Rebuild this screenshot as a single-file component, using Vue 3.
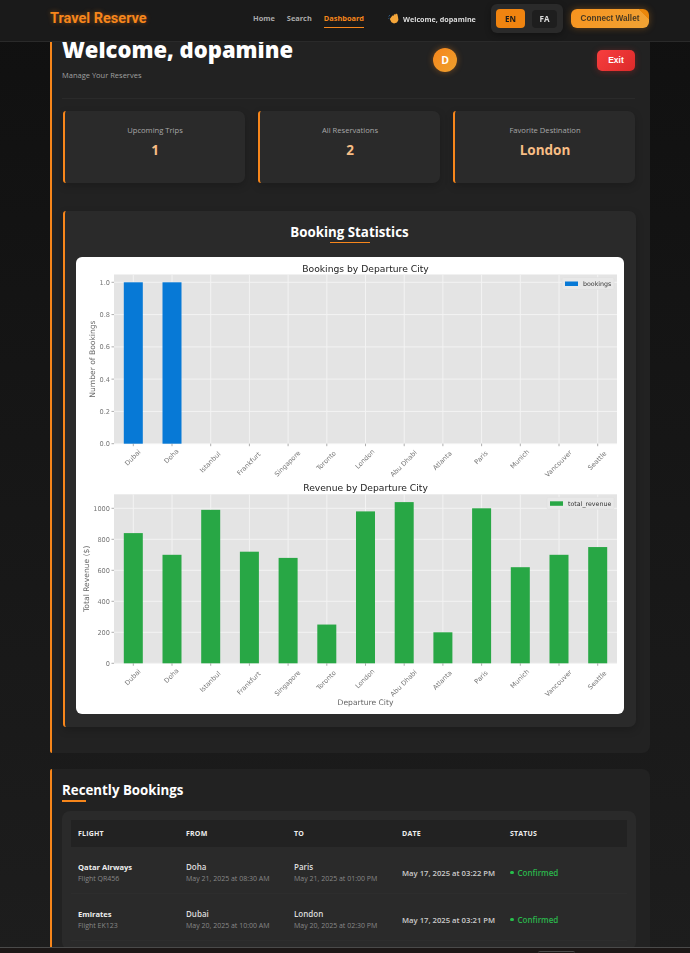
<template>
  <div class="page">
    <header class="topbar">
      <div class="logo">Travel Reserve</div>
      <nav class="nav">
        <a>Home</a>
        <a>Search</a>
        <a class="active">Dashboard</a>
      </nav>
      <div class="greet">
        <svg width="11" height="11" viewBox="0 0 11 11">
          <path d="M0.6 3.4 2 2.2M0.4 5.6 1.4 5.2" stroke="#2f5f8f" stroke-width="1" fill="none" />
          <path d="M1.8 6 4.4 2.4 5.6 2.8 6 1.2 7.4 1.4 8 0.6 9.4 1.2 10 4 10.4 7 9 9.6 6 10.6 3.4 9.2 Z" fill="#f5a63a" />
        </svg>
        <span>Welcome, dopamine</span>
      </div>
      <div class="lang">
        <button class="lang-btn on">EN</button>
        <button class="lang-btn">FA</button>
      </div>
      <button class="wallet">Connect Wallet</button>
    </header>

    <main class="main">
      <section class="panel">
        <div class="welcome">
          <div>
            <h1>Welcome, dopamine</h1>
            <p>Manage Your Reserves</p>
          </div>
          <div class="avatar">D</div>
          <button class="exit">Exit</button>
        </div>

        <div class="stats">
          <div v-for="s in stats" :key="s.label" class="stat">
            <div class="stat-label">{{ s.label }}</div>
            <div class="stat-value">{{ s.value }}</div>
          </div>
        </div>

        <div class="chart-panel">
          <h2>Booking Statistics</h2>
          <div class="chart-card">
            <svg class="chart" width="548" height="457" viewBox="76 257 548 457">
              <g v-for="c in charts" :key="c.title">
                <rect x="114" :y="c.top" width="503" :height="c.bottom - c.top" fill="#e4e4e4" />
                <line v-for="t in c.ticks" :key="t.label" x1="114" x2="617" :y1="t.y" :y2="t.y" stroke="#f3f3f3" />
                <line v-for="(city, i) in cities" :key="city" :x1="cx(i)" :x2="cx(i)" :y1="c.top" :y2="c.bottom" stroke="#f3f3f3" />
                <rect
                  v-for="(v, i) in c.values"
                  :key="i"
                  :x="cx(i) - 9.5"
                  :y="c.bottom - v * c.scale"
                  width="19"
                  :height="v * c.scale"
                  :fill="c.color"
                />
                <text x="365.5" :y="c.top - 3" class="title">{{ c.title }}</text>
                <g v-for="t in c.ticks" :key="t.label">
                  <line x1="111.5" x2="114" :y1="t.y" :y2="t.y" stroke="#777" stroke-width="0.6" />
                  <text x="110" :y="t.y + 2.5" class="tick" text-anchor="end">{{ t.label }}</text>
                </g>
                <g v-for="(city, i) in cities" :key="city">
                  <line :x1="cx(i)" :x2="cx(i)" :y1="c.bottom" :y2="c.bottom + 2.5" stroke="#777" stroke-width="0.6" />
                  <text
                    class="tick"
                    text-anchor="middle"
                    :transform="`translate(${cx(i) + 1} ${c.bottom + 8 + city.length * 1.5}) rotate(-45)`"
                  >{{ city }}</text>
                </g>
                <text class="axis" text-anchor="middle" :transform="`translate(${c.labelX} ${(c.top + c.bottom) / 2}) rotate(-90)`">{{ c.ylabel }}</text>
                <rect :x="c.legendX" :y="c.top + 3" :width="614 - c.legendX" height="12" rx="1.5" fill="#e8e8e8" stroke="#dedede" stroke-width="0.5" />
                <rect :x="c.legendX + 3" :y="c.top + 7" width="13" height="4.5" :fill="c.color" />
                <text :x="c.legendX + 21" :y="c.top + 11.5" class="legend">{{ c.legend }}</text>
              </g>
              <text x="365.5" y="705" class="axis" text-anchor="middle">Departure City</text>
            </svg>
          </div>
        </div>
      </section>

      <section class="panel recent">
        <h3>Recently Bookings</h3>
        <div class="table-wrap">
          <div class="row head">
            <div v-for="h in heads" :key="h">{{ h }}</div>
          </div>
          <div v-for="b in bookings" :key="b.code" class="row">
            <div>
              <div class="name">{{ b.airline }}</div>
              <div class="sub">Flight {{ b.code }}</div>
            </div>
            <div>
              <div class="city">{{ b.from }}</div>
              <div class="sub">{{ b.fromTime }}</div>
            </div>
            <div>
              <div class="city">{{ b.to }}</div>
              <div class="sub">{{ b.toTime }}</div>
            </div>
            <div class="date">{{ b.date }}</div>
            <div class="status"><i></i>Confirmed</div>
          </div>
        </div>
      </section>
    </main>

    <div class="bottombar"><span></span></div>
  </div>
</template>

<script setup>
const stats = [
  { label: 'Upcoming Trips', value: '1' },
  { label: 'All Reservations', value: '2' },
  { label: 'Favorite Destination', value: 'London' }
]

const cities = ['Dubai', 'Doha', 'Istanbul', 'Frankfurt', 'Singapore', 'Toronto', 'London', 'Abu Dhabi', 'Atlanta', 'Paris', 'Munich', 'Vancouver', 'Seattle']

const cx = (i) => 133.3 + i * 38.7

const charts = [
  {
    title: 'Bookings by Departure City',
    ylabel: 'Number of Bookings',
    legend: 'bookings',
    legendX: 562,
    labelX: 95,
    color: '#0779d6',
    top: 274.5,
    bottom: 443.7,
    scale: 161.4,
    values: [1, 1, 0, 0, 0, 0, 0, 0, 0, 0, 0, 0, 0],
    ticks: ['0.0', '0.2', '0.4', '0.6', '0.8', '1.0'].map((label) => ({ label, y: 443.7 - Number(label) * 161.4 }))
  },
  {
    title: 'Revenue by Departure City',
    ylabel: 'Total Revenue ($)',
    legend: 'total_revenue',
    legendX: 547,
    labelX: 89,
    color: '#28a745',
    top: 494.3,
    bottom: 663.3,
    scale: 0.155,
    values: [840, 700, 990, 720, 680, 250, 980, 1040, 200, 1000, 620, 700, 750],
    ticks: [0, 200, 400, 600, 800, 1000].map((v) => ({ label: String(v), y: 663.3 - v * 0.155 }))
  }
]

const heads = ['FLIGHT', 'FROM', 'TO', 'DATE', 'STATUS']

const bookings = [
  {
    airline: 'Qatar Airways',
    code: 'QR456',
    from: 'Doha',
    fromTime: 'May 21, 2025 at 08:30 AM',
    to: 'Paris',
    toTime: 'May 21, 2025 at 01:00 PM',
    date: 'May 17, 2025 at 03:22 PM'
  },
  {
    airline: 'Emirates',
    code: 'EK123',
    from: 'Dubai',
    fromTime: 'May 20, 2025 at 10:00 AM',
    to: 'London',
    toTime: 'May 20, 2025 at 02:30 PM',
    date: 'May 17, 2025 at 03:21 PM'
  }
]
</script>

<style>
body {
  margin: 0;
  background: #111;
}
</style>

<style scoped>
.page {
  height: 953px;
  overflow: hidden;
  background: linear-gradient(180deg, #101010, #1d1d1d);
  font-family: "Open Sans", "Noto Sans", sans-serif;
  color: #fff;
}

.topbar {
  position: fixed;
  top: 0;
  left: 0;
  right: 0;
  z-index: 5;
  height: 42px;
  box-sizing: border-box;
  border-bottom: 1px solid #2a2a2a;
  background: #1a1a1a;
  display: flex;
  align-items: center;
  padding: 0 41px 4px 50px;
}

.logo {
  font-family: Roboto, sans-serif;
  font-weight: 700;
  font-size: 14.5px;
  color: #f7861b;
  text-shadow: 0 0 5px rgba(247, 134, 27, 0.45);
  width: 203px;
}

.nav {
  display: flex;
  gap: 12px;
  font-size: 7.4px;
  font-weight: 700;
  color: #aaa;
  width: 135px;
}

.nav a {
  padding: 3px 0;
  line-height: 11px;
  border-bottom: 1px solid transparent;
}

.nav a.active {
  color: #f7861b;
  border-bottom-color: #f7861b;
}

.greet {
  display: flex;
  align-items: center;
  gap: 4px;
  font-size: 7.2px;
  font-weight: 700;
  color: #ddd;
  width: 103px;
}

.lang {
  display: flex;
  align-items: center;
  gap: 7px;
  padding: 5px 6px 5px 5px;
  background: #2a2a2a;
  border-radius: 6px;
  margin-right: 8px;
  box-shadow: 0 2px 6px rgba(0, 0, 0, 0.3);
}

.lang-btn {
  width: 25px;
  height: 18px;
  padding: 0;
  border: none;
  border-radius: 4px;
  background: #1e1e1e;
  color: #ddd;
  font-family: "Open Sans", sans-serif;
  font-size: 8px;
  font-weight: 700;
}

.lang-btn.on {
  width: 29px;
  height: 19px;
  background: #f08410;
  color: #1a1a1a;
}

.wallet {
  width: 78px;
  height: 19px;
  padding: 0;
  border: none;
  border-radius: 6px;
  background:
    linear-gradient(45deg, transparent 89%, #ea860a 89%),
    linear-gradient(135deg, #f7931e, #f0a335);
  color: #4a3a22;
  font-family: "Liberation Sans", sans-serif;
  font-size: 8.2px;
  font-weight: 700;
  box-shadow: 0 0 7px rgba(247, 147, 30, 0.35);
}

.main {
  display: flex;
  flex-direction: column;
  gap: 16px;
  width: 600px;
  margin: -28px 0 0 50px;
}

.panel {
  box-sizing: border-box;
  background: #222;
  border-left: 2px solid #f7861b;
  border-radius: 2px 8px 8px 2px;
  padding: 56px 11px 26px 10px;
}

.welcome {
  display: flex;
  justify-content: space-between;
  align-items: center;
  width: 573px;
  height: 70px;
  border-bottom: 1px solid #2a2a2a;
  box-sizing: content-box;
}

.welcome > div:first-child {
  margin-top: -14px;
}

h1 {
  margin: 0;
  font-size: 22px;
  line-height: 32px;
  font-weight: 800;
}

.welcome p {
  margin: 5px 0 0;
  font-size: 7.5px;
  color: #a0a0a0;
}

.avatar {
  width: 24px;
  height: 24px;
  margin-top: -6px;
  border-radius: 50%;
  background: linear-gradient(135deg, #f7861b, #eda02e);
  display: flex;
  align-items: center;
  justify-content: center;
  font-size: 10.5px;
  font-weight: 700;
  box-shadow: 0 0 6px rgba(247, 134, 27, 0.4);
}

.exit {
  width: 38px;
  height: 21px;
  margin-top: -6px;
  padding: 0;
  border: none;
  border-radius: 5px;
  background: linear-gradient(135deg, #f83e3e, #dc2a2a);
  color: #fff;
  font-family: "Liberation Sans", sans-serif;
  font-size: 8.5px;
  font-weight: 700;
  box-shadow: 0 1px 6px rgba(220, 40, 40, 0.35);
}

.stats {
  display: flex;
  gap: 13px;
  margin: 12px 0 0 1px;
}

.stat {
  box-sizing: border-box;
  width: 182px;
  height: 72px;
  background: #2a2a2a;
  border-left: 2px solid #f7861b;
  border-radius: 3px 7px 7px 3px;
  text-align: center;
  padding-top: 13px;
  box-shadow: 0 3px 8px rgba(0, 0, 0, 0.2);
}

.stat-label {
  font-size: 7.6px;
  font-weight: 500;
  color: #a8a8a8;
  line-height: 12px;
}

.stat-value {
  margin-top: 5px;
  font-size: 13.5px;
  font-weight: 700;
  color: #f7bd85;
  line-height: 18px;
}

.chart-panel {
  box-sizing: border-box;
  width: 573px;
  margin: 28px 0 0 1px;
  padding: 13px 11px 13px 11px;
  background: #2a2a2a;
  border-left: 2px solid #f7861b;
  border-radius: 3px 7px 7px 3px;
  box-shadow: 0 3px 8px rgba(0, 0, 0, 0.2);
}

h2 {
  position: relative;
  margin: 0 2px 14px 0;
  height: 19px;
  font-size: 13.3px;
  line-height: 17px;
  font-weight: 700;
  text-align: center;
}

h2::after {
  content: "";
  position: absolute;
  left: 50%;
  bottom: 0;
  width: 40px;
  height: 1px;
  margin-left: -20px;
  background: #f7861b;
}

.chart-card {
  width: 548px;
  height: 457px;
  background: #fff;
  border-radius: 6px;
  overflow: hidden;
}

.chart {
  display: block;
  filter: blur(0.35px);
  font-family: "DejaVu Sans", sans-serif;
}

.title {
  font-size: 9.2px;
  fill: #222;
  text-anchor: middle;
}

.tick {
  font-size: 6.6px;
  fill: #777;
}

.axis {
  font-size: 7.6px;
  fill: #666;
}

.legend {
  font-size: 6.3px;
  fill: #333;
}

.recent {
  padding: 12px 12px 0 10px;
  height: 260px;
}

h3 {
  position: relative;
  margin: 0 0 9px;
  height: 21px;
  font-size: 13.3px;
  line-height: 18px;
  font-weight: 700;
}

h3::after {
  content: "";
  position: absolute;
  left: 0;
  bottom: 0;
  width: 24px;
  height: 2px;
  background: #f7861b;
}

.table-wrap {
  padding: 9px;
  width: 556px;
  background: #2a2a2a;
  border-radius: 8px;
}

.row {
  display: grid;
  grid-template-columns: 108px 108px 108px 108px 1fr;
  align-items: center;
  height: 47px;
  padding: 5px 7px 0;
  border-bottom: 1px solid #2d2d2d;
  box-sizing: border-box;
}

.row.head {
  height: 27px;
  padding: 0 7px 1px;
  background: #222;
  border-bottom: none;
  font-size: 7px;
  font-weight: 700;
  letter-spacing: 0.2px;
  color: #eee;
}

.name,
.city {
  font-size: 8px;
  font-weight: 600;
  line-height: 12px;
  color: #ddd;
}

.name {
  font-size: 7.6px;
  color: #eee;
  font-weight: 700;
}

.sub {
  font-size: 7px;
  line-height: 12px;
  color: #888;
}

.date {
  font-size: 7.7px;
  font-weight: 600;
  color: #ccc;
}

.status {
  display: flex;
  align-items: center;
  gap: 4px;
  font-size: 8px;
  font-weight: 600;
  color: #2ab64c;
}

.status i {
  width: 3.5px;
  height: 3.5px;
  border-radius: 50%;
  background: #27c04c;
}

.bottombar {
  position: fixed;
  left: 0;
  right: 0;
  bottom: 0;
  height: 6px;
  box-sizing: border-box;
  border-top: 1px solid #4a4a4a;
  background: #1c1716;
  z-index: 5;
}

.bottombar span {
  position: absolute;
  left: 538px;
  top: 3px;
  width: 37px;
  height: 3px;
  border-radius: 2px 2px 0 0;
  border-top: 1px solid #4a4a4a;
}
</style>
